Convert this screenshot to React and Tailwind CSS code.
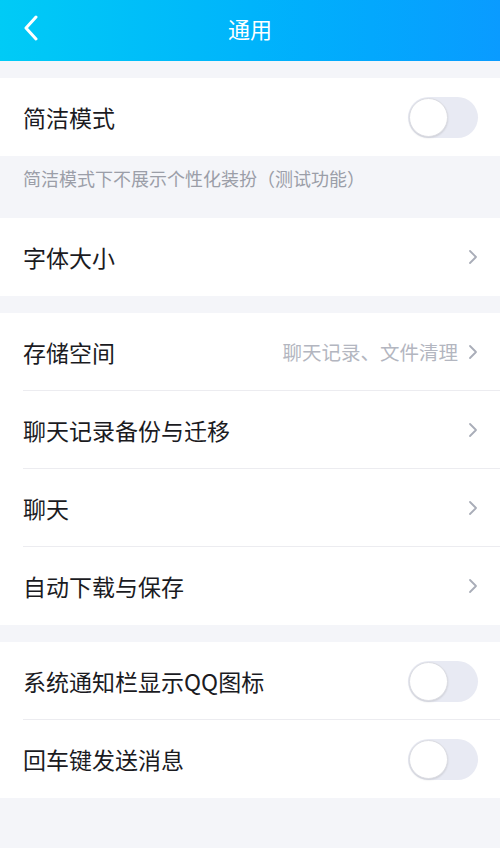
import React from "react";

const font = { fontFamily: '"Noto Sans CJK SC", "Noto Sans", sans-serif' };

function Toggle() {
  return (
    <div className="w-[70px] h-[41px] rounded-full bg-[#e8eaf3] p-[1px] flex items-center">
      <div className="w-[39px] h-[39px] rounded-full bg-white border border-[#dcdde3] shadow-[0_1px_2px_rgba(0,0,0,0.12)]" />
    </div>
  );
}

function Chevron() {
  return (
    <svg width="10" height="16" viewBox="0 0 10 16" fill="none">
      <path d="M2 2 L8 8 L2 14" stroke="#a9adb8" strokeWidth="1.8" strokeLinecap="round" strokeLinejoin="round" />
    </svg>
  );
}

function Row({ label, extra, toggle, divider }) {
  return (
    <div className="h-[78px] flex items-center pl-[23px] relative">
      <div className="flex-1 flex items-center pr-[22px] h-full">
        <span className="flex-1 text-[23px] text-[#1b1b1f]">{label}</span>
        {extra && <span className="text-[19.5px] text-[#b3b6c0] mr-[10px]">{extra}</span>}
        {toggle ? <Toggle /> : <Chevron />}
      </div>
      {divider && <div className="absolute left-[23px] right-0 bottom-0 h-px bg-[#ececf0]" />}
    </div>
  );
}

export default function App() {
  return (
    <div className="w-[500px] h-[848px] bg-[#f4f5f9] flex flex-col" style={font}>
      <div className="h-[61px] flex items-center relative bg-gradient-to-r from-[#00cbf6] via-[#00b4fb] to-[#0a9bff]">
        <svg className="absolute left-[22px] top-[15px]" width="18" height="26" viewBox="0 0 18 26" fill="none">
          <path d="M14 2 L4 13 L14 24" stroke="white" strokeWidth="3" strokeLinecap="round" strokeLinejoin="round" />
        </svg>
        <span className="flex-1 text-center text-[22px] text-white -mt-[5px]">通用</span>
      </div>
      <div className="h-[17px]" />
      <div className="bg-white">
        <Row label="简洁模式" toggle />
      </div>
      <div className="h-[62px] pt-[9px] pl-[23px] text-[18px] text-[#9b9ea8]">
        简洁模式下不展示个性化装扮（测试功能）
      </div>
      <div className="bg-white">
        <Row label="字体大小" />
      </div>
      <div className="h-[17px]" />
      <div className="bg-white">
        <Row label="存储空间" extra="聊天记录、文件清理" divider />
        <Row label="聊天记录备份与迁移" divider />
        <Row label="聊天" divider />
        <Row label="自动下载与保存" />
      </div>
      <div className="h-[17px]" />
      <div className="bg-white">
        <Row label="系统通知栏显示QQ图标" toggle divider />
        <Row label="回车键发送消息" toggle />
      </div>
    </div>
  );
}
